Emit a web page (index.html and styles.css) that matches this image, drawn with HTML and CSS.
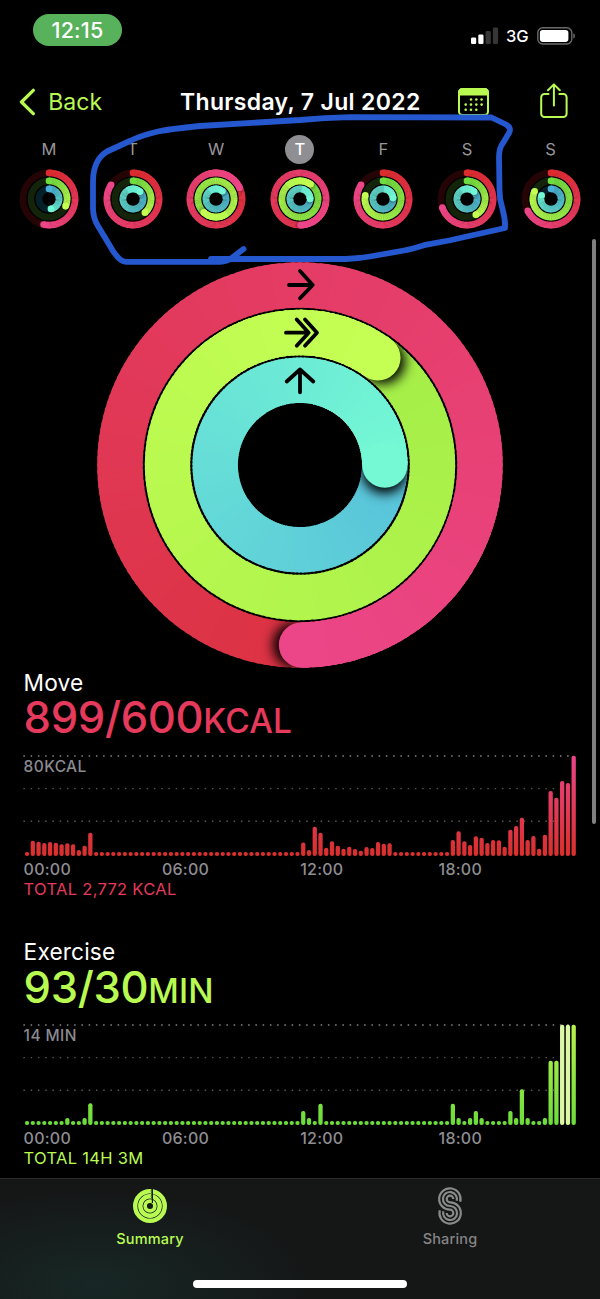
FILE: index.html
```html
<!DOCTYPE html>
<html lang="en">
<head>
<meta charset="utf-8">
<title>Activity</title>
<link rel="stylesheet" href="styles.css">
</head>
<body>
<div class="screen">
  <header class="status">
    <span class="clock">12:15</span>
    <div class="status-right">
      <svg class="signal" width="28" height="18" viewBox="0 0 28 18">
        <rect x="0" y="10.5" width="5.2" height="6.5" rx="1.2" fill="#fff"/>
        <rect x="7.3" y="7.5" width="5.2" height="9.5" rx="1.2" fill="#fff"/>
        <rect x="14.6" y="4" width="5.2" height="13" rx="1.2" fill="#363636"/>
        <rect x="21.9" y="0.5" width="5.2" height="16.5" rx="1.2" fill="#363636"/>
      </svg>
      <span class="network">3G</span>
      <svg class="battery" width="39" height="18" viewBox="0 0 39 18">
        <rect x="0.8" y="0.8" width="34" height="16.2" rx="5" fill="none" stroke="#6b6b6b" stroke-width="1.4"/>
        <rect x="2.9" y="2.9" width="28.5" height="12" rx="2.8" fill="#fff"/>
        <path d="M36.3 6.2c2.2.8 2.2 4.6 0 5.4z" fill="#6b6b6b"/>
      </svg>
    </div>
  </header>

  <nav class="nav">
    <svg class="chevron" width="18" height="28" viewBox="0 0 18 28"><path d="M15.300 2.300 3.500 14l11.800 11.700" fill="none" stroke="#b9fa52" stroke-width="3.300" stroke-linecap="round" stroke-linejoin="round"/></svg>
    <span class="back">Back</span>
    <h1 class="title">Thursday, 7 Jul 2022</h1>
    <svg class="calendar" width="32" height="29" viewBox="0 0 32 29">
      <rect x="1" y="1" width="29" height="26" rx="3.500" fill="none" stroke="#b9fa52" stroke-width="2"/>
      <path d="M0 7.500V4.500A4.500 4.500 0 0 1 4.500 0h22A4.500 4.500 0 0 1 31 4.500v3z" fill="#b9fa52"/>
      <g fill="#b9fa52">
        <circle cx="13" cy="11.500" r="1.300"/><circle cx="18.300" cy="11.500" r="1.300"/><circle cx="23.600" cy="11.500" r="1.300"/>
        <circle cx="7.700" cy="16.600" r="1.300"/><circle cx="13" cy="16.600" r="1.300"/><circle cx="18.300" cy="16.600" r="1.300"/><circle cx="23.600" cy="16.600" r="1.300"/>
        <circle cx="7.700" cy="21.700" r="1.300"/><circle cx="13" cy="21.700" r="1.300"/><circle cx="18.300" cy="21.700" r="1.300"/>
      </g>
    </svg>
    <svg class="share" width="28" height="36" viewBox="0 0 28 36"><path d="M8.500 11H4.500A3.300 3.300 0 0 0 1.200 14.300V30.800A3.300 3.300 0 0 0 4.500 34.100H23.300A3.300 3.300 0 0 0 26.600 30.800V14.300A3.300 3.300 0 0 0 23.300 11H19.300M13.900 22.500V1.500M8 7.200 13.900 1.400 19.800 7.200" fill="none" stroke="#b9fa52" stroke-width="2" stroke-linecap="round" stroke-linejoin="round"/></svg>
  </nav>

  <section class="week" id="week"></section>
  <section class="rings" id="rings"></section>

  <section class="metric move">
    <h2 class="name">Move</h2>
    <p class="value">899/600<span class="unit">KCAL</span></p>
    <div class="chart"><div id="move-chart"></div><span class="peak">80KCAL</span></div>
    <div class="hours"><span>00:00</span><span>06:00</span><span>12:00</span><span>18:00</span></div>
    <p class="total">TOTAL 2,772 KCAL</p>
  </section>

  <section class="metric exercise">
    <h2 class="name">Exercise</h2>
    <p class="value">93/30<span class="unit">MIN</span></p>
    <div class="chart"><div id="exercise-chart"></div><span class="peak">14 MIN</span></div>
    <div class="hours"><span>00:00</span><span>06:00</span><span>12:00</span><span>18:00</span></div>
    <p class="total">TOTAL 14H 3M</p>
  </section>

  <footer class="tabbar">
    <div class="tabs">
      <div class="tab active">
        <svg width="36" height="40" viewBox="-18 -20 36 40">
          <g fill="none" stroke="#b9fa52">
            <circle r="14.800" stroke-width="4.400"/><circle r="9.700" stroke-width="4.400"/><circle r="4.900" stroke-width="3.700"/>
          </g>
          <path d="M2.400 -18V-3" stroke="#151a19" stroke-width="1.200"/>
          <path d="M2 -17.500Q0.200 -14.800 2 -12.500M2 -12Q0.200 -9.600 2 -7.500" stroke="#151a19" stroke-width=".7" fill="none"/>
        </svg>
        <span>Summary</span>
      </div>
      <div class="tab">
        <svg width="36" height="40" viewBox="-18 -20 36 40">
          <g fill="none" stroke="#8a8a8a" stroke-width="2.200">
            <path d="M10.200 -4.200A10.700 10.700 0 1 0 0 3.700A3.300 3.300 0 1 1 -3.300 7"/>
            <path d="M6.700 -5.200A7 7 0 1 0 0 0A7 7 0 1 1 -6.700 5.200"/>
            <path d="M3.300 -7A3.300 3.300 0 1 0 0 -3.700A10.700 10.700 0 1 1 -10.200 4.200"/>
          </g>
        </svg>
        <span>Sharing</span>
      </div>
    </div>
    <div class="home"></div>
  </footer>

  <div class="scrollbar"></div>
  <svg class="marker" width="600" height="290" viewBox="0 0 600 290">
    <path d="M211 259H346Q358 258.500 370 256.500L404 250.500Q412 249 424 245.200L449 240.500L505 228Q505.500 220 502.500 209Q499.500 200 499.500 190L499 157Q499 148 503 143L509 133Q512 128 506 124.500L491.500 117.500L350 117.200Q325 117.800 300 120L200 126Q170 129 158 131.500Q141 135.500 131 140.500L107 151.500Q93 160 93 182V208Q93 218 98 226L113 251Q120 261.800 126 261.800H220Q227 261.500 231 258.500L243.500 249" fill="none" stroke="#2558cf" stroke-width="5.800" stroke-linecap="round" stroke-linejoin="round"/>
  </svg>
</div>
<script src="app.js"></script>
</body>
</html>
```
FILE: styles.css
```css
* { box-sizing: border-box; }
body { margin: 0; background: #000; }
h1, h2, p { margin: 0; font-weight: 400; }
svg { display: block; flex: none; }

.screen {
  position: relative;
  width: 600px;
  height: 1299px;
  overflow: hidden;
  display: flex;
  flex-direction: column;
  background: #000;
  color: #fff;
  font-family: Inter, "Liberation Sans", sans-serif;
  white-space: nowrap;
}

.status {
  height: 76px;
  flex: none;
  display: flex;
  justify-content: space-between;
  align-items: flex-start;
  padding: 14.300px 24px 0 33.300px;
}
.clock {
  width: 88.400px;
  height: 32px;
  border-radius: 16px;
  background: #58b25b;
  font-size: 21.500px;
  font-weight: 500;
  line-height: 33px;
  text-align: center;
  letter-spacing: 0.2px;
}
.status-right { display: flex; align-items: center; height: 18px; margin: 12.700px 0 0 0; }
.network { margin: 1px 8px 0 7px; width: 23px; font-size: 16.500px; font-weight: 500; line-height: 18px; }

.nav { height: 56px; flex: none; display: flex; align-items: flex-start; padding-left: 18px; }
.chevron { margin-top: 12px; }
.back { margin: 11px 0 0 12.300px; width: 131.700px; font-size: 23px; line-height: 30px; color: #b9fa52; }
.title { margin-top: 11px; width: 278px; font-size: 23px; font-weight: 600; line-height: 30px; letter-spacing: 0.330px; }
.calendar { margin-top: 12px; }
.share { margin: 7px 0 0 50px; }

.week { height: 130px; flex: none; display: grid; grid-template-columns: repeat(7, 83.6px); padding-left: 7.200px; align-content: start; }
.day { display: flex; flex-direction: column; align-items: center; }
.letter { margin-top: 3px; width: 29px; height: 29px; border-radius: 50%; font-size: 16.500px; line-height: 29px; text-align: center; color: #96969a; }
.letter.selected { background: #8e8e93; color: #fff; font-weight: 500; }
.day svg { margin-top: 4.500px; }

.rings { height: 407.500px; flex: none; padding-left: 96.400px; }
.rings svg { margin-top: -2px; }

.metric { height: 269.700px; flex: none; padding-left: 23.600px; }
.name { font-size: 22.700px; line-height: 25.400px; letter-spacing: 0.150px; }
.value { height: 44px; font-size: 43.600px; line-height: 46px; font-weight: 450; letter-spacing: -0.350px; }
.unit { font-size: 33.500px; font-weight: 500; letter-spacing: 0.100px; }
.move .value, .move .total { color: #e53a5b; }
.exercise .value, .exercise .total { color: #b9fa52; }
.chart { position: relative; width: 552px; margin-top: 15.900px; }
.peak { position: absolute; left: 0; top: 2px; font-size: 15.500px; line-height: 20px; font-weight: 500; color: #8b8b90; letter-spacing: 0.400px; }
.hours { display: grid; grid-template-columns: repeat(4, 138.300px); margin-top: 3px; font-size: 16px; line-height: 20px; font-weight: 500; color: #8e8e93; letter-spacing: 0.250px; }
.total { font-size: 16.500px; line-height: 20px; letter-spacing: 0.300px; }

.tabbar {
  position: absolute;
  left: 0;
  right: 0;
  bottom: 0;
  height: 121px;
  border-top: 1px solid #292929;
  background: radial-gradient(ellipse 230px 100px at 95px 105px, #172725, #17272500), #151616;
}
.tabs { display: grid; grid-template-columns: 1fr 1fr; padding-top: 7px; }
.tab { display: flex; flex-direction: column; align-items: center; color: #858585; font-size: 14.500px; font-weight: 500; line-height: 20px; letter-spacing: 0.150px; }
.tab span { margin-top: 3px; }
.tab.active { color: #b9fa52; }
.home { width: 214px; height: 7.500px; border-radius: 4px; background: #fff; margin: 31px auto 0; }

.scrollbar { position: absolute; left: 591.500px; top: 239px; width: 4.500px; height: 585px; border-radius: 3px; background: #7f7f7f; }
.marker { position: absolute; left: 0; top: 0; }
```
FILE: app.js
```js
const RAMPS = {
  move: { from: [220, 43, 46], to: [236, 70, 137], track: '#250406' },
  exercise: { from: [112, 220, 64], to: [196, 255, 82], track: '#13240b' },
  stand: { from: [75, 176, 216], to: [114, 248, 212], track: '#06202a' }
};
let clipCount = 0;

const mix = (a, b, t) => `rgb(${a.map((v, i) => Math.round(v + (b[i] - v) * t)).join(',')})`;
const point = (r, deg) => {
  const a = deg * Math.PI / 180;
  return [(r * Math.sin(a)).toFixed(3), (-r * Math.cos(a)).toFixed(3)];
};

// Draws one activity ring, ending at `end` degrees (above 360 it overlaps itself).
function ring(kind, r, w, end, colors) {
  const ramp = RAMPS[kind];
  const start = Math.max(0, end - 360);
  const from = colors ? colors[0] : ramp.from;
  const to = colors ? colors[1] : ramp.to;
  const colorAt = d => mix(from, to, colors ? (d - start) / (end - start) : d / end);
  const arcs = (a, b) => {
    let out = '';
    for (let d = a; d < b; d += 2) {
      const [x1, y1] = point(r, d);
      const [x2, y2] = point(r, Math.min(b, d + 3));
      out += `<path d="M${x1} ${y1}A${r} ${r} 0 0 1 ${x2} ${y2}" stroke="${colorAt(d)}"/>`;
    }
    return `<g fill="none" stroke-width="${w}">${out}</g>`;
  };
  const cap = (d, c) => {
    const [x, y] = point(r, d);
    return `<circle cx="${x}" cy="${y}" r="${w / 2}" fill="${c}"/>`;
  };
  let svg = end <= 360 ? `<circle r="${r}" fill="none" stroke="${ramp.track}" stroke-width="${w}"/>` : '';
  if (end <= 360) return svg + cap(0, colorAt(0)) + arcs(0, end) + cap(end, colorAt(end));
  const id = 'band' + clipCount++;
  const o = r + w / 2, n = r - w / 2;
  const circle = q => `M${-q} 0a${q} ${q} 0 1 0 ${2 * q} 0a${q} ${q} 0 1 0 ${-2 * q} 0z`;
  const [sx, sy] = point(r, end + w * 0.13 / r * 57.3);
  svg += `<clipPath id="${id}"><path clip-rule="evenodd" d="${circle(o)}${circle(n)}"/></clipPath>`;
  svg += arcs(start, end);
  svg += `<g clip-path="url(#${id})"><circle cx="${sx}" cy="${sy}" r="${w * 0.5}" fill="#000" opacity="${w > 20 ? 1 : 0.4}" style="filter:blur(${w * 0.13}px)"/></g>`;
  return svg + arcs(end - 80, end) + cap(end, colorAt(end));
}

const week = [
  ['M', 192, 114, 169], ['T', 303, 139, 405], ['W', 425, 583, 400], ['T', 539, 396, 450],
  ['F', 303, 282, 445], ['S', 251, 151, 405], ['S', 243, 295, 292]
];
document.getElementById('week').innerHTML = week.map(([d, m, e, s], i) =>
  `<div class="day"><span class="letter${i === 3 ? ' selected' : ''}">${d}</span>
   <svg width="60" height="60" viewBox="-30 -30 60 60">${ring('move', 26.1, 6.6, m)}${ring('exercise', 18.1, 6.6, e)}${ring('stand', 10.1, 6.6, s)}</svg></div>`
).join('');

document.getElementById('rings').innerHTML =
  `<svg width="408" height="408" viewBox="-204 -205 408 408">
    ${ring('move', 180, 45.5, 539.5, [[220, 50, 66], [236, 70, 136]])}
    ${ring('exercise', 132.5, 45.3, 396, [[164, 238, 72], [198, 255, 84]])}
    ${ring('stand', 84.8, 45.4, 450, [[88, 194, 218], [116, 249, 212]])}
    <g fill="none" stroke="#000" stroke-width="3.8" stroke-linecap="round" stroke-linejoin="round">
      <path d="M-11 -180H12.500M0 -194 12.700 -180 0 -166.700"/>
      <path d="M-14 -132.300H8.500M-3.300 -145.500 8.700 -132.300 -3.300 -119.300M5 -145.500 17 -132.300 5 -119.300"/>
      <path d="M0 -95.500V-72.700M-13.300 -83.500 0 -95.500 13.300 -83.500"/>
    </g>
  </svg>`;

const rest = n => Array(n).fill(4);
const moveBars = [4, 15.3, 14.3, 13, 14, 13.3, 11.7, 12.7, 11.7, 6, 10.3, 23.3, ...rest(36),
  13.5, 6, 29.3, 23.3, 8.3, 14.7, 10.3, 7.3, 9.3, 7, 5.3, 9, 8, 14, 12.3, 12.7, ...rest(10),
  16, 24.7, 14.7, 11, 19.7, 18.3, 13, 16, 15.7, 9.3, 26.3, 30, 38.3, 16, 20, 7.3, 21.3,
  65, 58.3, 75, 73, 100.3];
const exerciseBars = [...rest(7), 7, 4, 4, 7, 21.7, ...rest(36), 14, 7, 4, 21.3, ...rest(22),
  21.3, 7, 4, 7, 14, 7, ...rest(4), 14, 7, 35.7, 7, 4, 4, 7, 64.3, 64.3, 100.3, 100.3, 100.3];

function chart(id, bars, top, bottom, bright) {
  const rects = bars.map((h, i) =>
    `<rect x="${(0.9 + i * 5.754).toFixed(2)}" y="${101 - h}" width="4.3" height="${h}" rx="2" fill="${bright.includes(i) ? '#dcf7a6' : `url(#${id}-fill)`}"/>`).join('');
  const line = (y, c) => `<path d="M-0.6 ${y}H548" stroke="${c}" stroke-width="1.4" stroke-dasharray="1.5 5.75"/>`;
  document.getElementById(id).innerHTML =
    `<svg width="552" height="101" viewBox="0 0 552 101" overflow="visible">
      <linearGradient id="${id}-fill" gradientUnits="userSpaceOnUse" x1="0" y1="0" x2="0" y2="101">
        <stop offset="0" stop-color="${top}"/><stop offset="1" stop-color="${bottom}"/></linearGradient>
      ${line(1, '#858585')}${line(33.600, '#555')}${line(66.300, '#555')}${rects}</svg>`;
}
chart('move-chart', moveBars, '#ea4689', '#d92f2c', []);
chart('exercise-chart', exerciseBars, '#b9f24e', '#6bdc3b', [93, 94]);
```
